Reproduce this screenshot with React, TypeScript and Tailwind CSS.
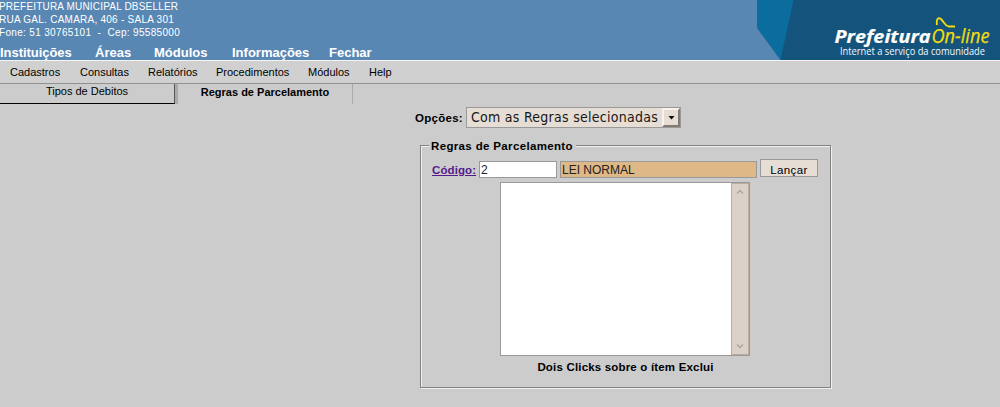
import React from 'react';

const modules = [
  { label: 'Instituições', box: 'w-[95px] tracking-[-0.05px]' },
  { label: 'Áreas', box: 'w-[59px]' },
  { label: 'Módulos', box: 'w-[78px]' },
  { label: 'Informações', box: 'w-[97px]' },
  { label: 'Fechar', box: 'w-[60px]' },
];

const menus = [
  { label: 'Cadastros', box: 'w-[70px]' },
  { label: 'Consultas', box: 'w-[68px]' },
  { label: 'Relatórios', box: 'w-[68px]' },
  { label: 'Procedimentos', box: 'w-[92px]' },
  { label: 'Módulos', box: 'w-[61px]' },
  { label: 'Help', box: 'w-[40px]' },
];

function Logo() {
  return (
    <svg width="243" height="60" viewBox="0 0 243 60" className="block shrink-0">
      <rect width="243" height="60" fill="#14547c" />
      <path d="M0 0H36.5L23.500 60L0 28Z" fill="#0b6d9d" />
      <path d="M0 28L23.500 60H0Z" fill="#5987b4" />
      <g fontFamily="'Open Sans', 'Noto Sans', sans-serif">
        <text x="77.500" y="43" fontSize="18" fontWeight="700" fontStyle="italic" fill="#fff" stroke="#fff" strokeWidth="0.200" textLength="96" lengthAdjust="spacingAndGlyphs">Prefeitura</text>
        <text x="174.500" y="43" fontSize="19.500" fontStyle="italic" fill="#f2dc0c" stroke="#f2dc0c" strokeWidth="0.250" textLength="58" lengthAdjust="spacingAndGlyphs">On-line</text>
        <text x="83" y="54.500" fontSize="10" fill="#f4f8fb" textLength="145" lengthAdjust="spacingAndGlyphs">Internet a serviço da comunidade</text>
      </g>
      <path d="M180 25C179 19 181 17 184 19C188 23 188 26 192 26.500H198" fill="none" stroke="#f2dc0c" strokeWidth="1.800" />
    </svg>
  );
}

function Header() {
  return (
    <header className="flex h-[61px] justify-between border-b border-[#f4f4f4] bg-[#5987b4] text-white">
      <div className="flex flex-col">
        <div className="-ml-px h-[45px] whitespace-nowrap text-[10px] leading-[13px]">
          <p className="tracking-[0.18px]">PREFEITURA MUNICIPAL DBSELLER</p>
          <p className="tracking-[0.25px]">RUA GAL. CAMARA, 406 - SALA 301</p>
          <p className="whitespace-pre tracking-[0.33px]">Fone: 51 30765101  -  Cep: 95585000</p>
        </div>
        <nav className="flex whitespace-nowrap text-[13px] font-bold leading-[15px]">
          {modules.map((m) => <a key={m.label} className={m.box}>{m.label}</a>)}
        </nav>
      </div>
      <Logo />
    </header>
  );
}

function SelectedRules() {
  return (
    <div className="ml-[79px] mt-[4px] flex h-[174px] w-[250px] border border-[#999] bg-white">
      <div className="flex-1" />
      <div className="flex w-[18px] flex-col items-center justify-between border border-[#c0aa98] bg-[#dcd1c8] py-[4px]">
        <svg width="8" height="8" viewBox="0 0 8 8"><path d="M1 5.500L4 2.500L7 5.500" fill="none" stroke="#b1a092" strokeWidth="1.300" /></svg>
        <svg width="8" height="8" viewBox="0 0 8 8"><path d="M1 2.500L4 5.500L7 2.500" fill="none" stroke="#b1a092" strokeWidth="1.300" /></svg>
      </div>
    </div>
  );
}

export default function App() {
  return (
    <div className="h-[407px] w-[1000px] overflow-hidden bg-[#ccc] font-['Liberation_Sans',Arial,sans-serif] text-black">
      <Header />
      <nav className="flex h-[23px] whitespace-nowrap border-b border-[#909090] bg-[#d0d0d0] pl-[10px] text-[11px] leading-[22px]">
        {menus.map((m) => <a key={m.label} className={m.box}>{m.label}</a>)}
      </nav>
      <div className="flex h-[20px] text-[11px] leading-[15px]">
        <div className="w-[175px] border-b border-r border-b-black border-r-[#555] text-center">Tipos de Debitos</div>
        <div className="w-[178px] border-l-[3px] border-r border-[#aaa] pt-px text-center font-bold">Regras de Parcelamento</div>
      </div>
      <main className="ml-[415px] pt-[3px] text-[11.5px]">
        <div className="flex h-[21px]">
          <label className="w-[51px] whitespace-nowrap font-bold leading-[22px] tracking-[0.28px]">Opções:</label>
          <div className="flex w-[215px] justify-between border border-[#999] bg-[#e6ddd4] pl-[4px]">
            <span className="whitespace-nowrap font-['DejaVu_Sans_Condensed','DejaVu_Sans',sans-serif] text-[14px] leading-[19px] tracking-[0.27px] text-[#181818]">Com as Regras selecionadas</span>
            <span className="flex w-[18px] items-center justify-center border-2 border-b-[#827b74] border-l-[#f8f3ef] border-r-[#827b74] border-t-[#f8f3ef]">
              <svg width="7" height="4" viewBox="0 0 7 4"><path d="M0.500 0H6.500L3.500 3.500Z" /></svg>
            </span>
          </div>
        </div>
        <div className="ml-[5px] mt-[17px] h-[243px] w-[411px] border border-[#848484] shadow-[1px_1px_0_#f2eeee,inset_1px_1px_0_#f2eeee]">
          <div className="-mt-[8px] ml-[8px] h-[16px] w-[147px] whitespace-nowrap bg-[#ccc] pl-[2px] font-bold leading-[16px] tracking-[0.35px]">Regras de Parcelamento</div>
          <div className="ml-[11px] mt-[6px] flex h-[18px]">
            <a className="w-[47px] whitespace-nowrap font-bold leading-[20px] tracking-[0.1px] text-[#551a8b] underline">Código:</a>
            <div className="mt-px w-[78px] border border-[#999] bg-white pl-px text-[12px] leading-[17px] text-[#222]">2</div>
            <div className="ml-[3px] mt-px w-[197px] border border-[#999] bg-[#deb887] pl-px text-[12px] leading-[17px] text-[#222]">LEI NORMAL</div>
            <button className="-mt-px mb-px ml-[3px] w-[58px] border border-[#999] bg-[#e6ddd4] pt-px text-[11.5px] leading-[19px] tracking-[0.4px]">Lançar</button>
          </div>
          <SelectedRules />
          <p className="mt-[4px] w-[409px] text-center font-bold leading-[15px] tracking-[0.18px]">Dois Clicks sobre o ítem Exclui</p>
        </div>
      </main>
    </div>
  );
}
